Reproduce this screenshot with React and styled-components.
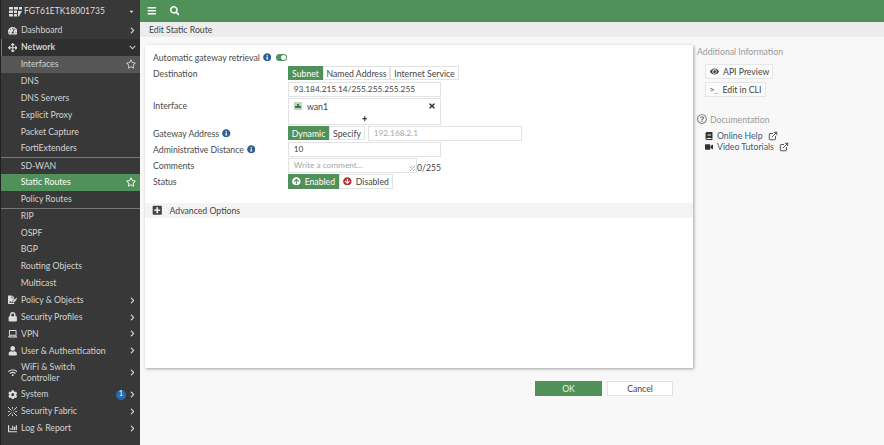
import React from 'react';
import styled, { createGlobalStyle } from 'styled-components';
import { ExternalLink } from 'lucide-react';
import {
  FaArrowsAlt, FaBars, FaBook, FaChartBar, FaChevronDown, FaChevronRight, FaCog, FaEye,
  FaInfoCircle, FaLaptop, FaLock, FaPlus, FaPlusSquare, FaRegQuestionCircle, FaRegStar, FaSearch,
  FaTachometerAlt, FaTimes, FaUser, FaVideo, FaWifi, FaArrowCircleUp, FaArrowCircleDown,
  FaFileSignature, FaCaretDown,
} from 'react-icons/fa';

const GREEN = '#4f9158';

const Global = createGlobalStyle`
  html, body { margin: 0; height: 100%; }
  body { font-family: Lato, "Open Sans", sans-serif; font-size: 8.7px; color: #444; background: #f8f8f8; overflow: hidden; }
  #root { height: 100%; }
  * { box-sizing: border-box; }
`;

const Page = styled.div`
  display: flex;
  width: 884px;
  height: 445px;
`;

const Sidebar = styled.nav`
  width: 140px;
  flex: none;
  background: #383838;
  color: #ddd;
  border-left: 1px solid #222;
`;

const Brand = styled.div`
  display: flex;
  align-items: center;
  height: 22.3px;
  padding: 0 5px 0 8px;
  gap: 2px;
  font-size: 8.5px;
  color: #dedede;
  svg:last-child { margin-left: auto; }
`;

const Item = styled.div`
  position: relative;
  display: flex;
  align-items: center;
  min-height: ${p => p.$tall ? 27 : 16.85}px;
  padding-left: ${p => p.$sub ? 19.7 : p.$bold ? 5 : 6}px;
  padding-right: 4px;
  line-height: 10.5px;
  color: ${p => p.$active ? '#fff' : '#d2d2d2'};
  font-weight: ${p => p.$bold ? 700 : 400};
  background: ${p => p.$active ? GREEN : p.$hover ? '#565656' : p.$bold ? '#2f2f2f' : 'transparent'};
  border-left: ${p => p.$bold ? `1px solid ${GREEN}` : 'none'};
  border-top: ${p => p.$line ? '1px solid #777' : 'none'};
`;

const ItemIcon = styled.span`
  display: flex;
  justify-content: center;
  width: 11px;
  margin-right: 3px;
  color: #ddd;
  font-size: 9.5px;
`;

const ItemTail = styled.span`
  display: flex;
  align-items: center;
  gap: 3px;
  margin-left: auto;
  font-size: 7px;
`;

const StarTail = styled(ItemTail)`
  font-size: 10px;
`;

const Badge = styled.span`
  display: flex;
  align-items: center;
  justify-content: center;
  width: 10px;
  height: 10px;
  border-radius: 50%;
  background: #2a6aa8;
  color: #fff;
  font-size: 7.5px;
`;

const Main = styled.main`
  flex: 1;
  display: flex;
  flex-direction: column;
  min-width: 0;
`;

const TopBar = styled.header`
  display: flex;
  align-items: center;
  gap: 13px;
  height: 22px;
  padding-left: 7px;
  background: ${GREEN};
  color: #fff;
  font-size: 9.5px;
`;

const Crumb = styled.div`
  display: flex;
  align-items: center;
  height: 15px;
  padding-left: 9px;
  background: #ececec;
  color: #444;
`;

const Content = styled.div`
  flex: 1;
  display: flex;
  padding: 8px 0 0 5px;
`;

const Left = styled.div`
  width: 548px;
  flex: none;
`;

const Card = styled.section`
  height: 323px;
  padding-top: 4px;
  background: #fff;
  box-shadow: 1px 1px 3px rgba(0, 0, 0, 0.35);
`;

const Row = styled.div`
  display: grid;
  grid-template-columns: 135px 1fr;
  align-items: ${p => p.$start ? 'start' : 'center'};
  min-height: 16px;
  margin-top: ${p => p.$top || 0}px;
  padding-left: 8px;
`;

const Label = styled.div`
  display: flex;
  align-items: center;
  gap: 3px;
  white-space: nowrap;
  color: #4a4a4a;
  padding-top: ${p => p.$top || 0}px;
`;

const Info = styled(FaInfoCircle)`
  flex: none;
  color: #2f5f8f;
  font-size: 8.5px;
`;

const Toggle = styled.span`
  position: relative;
  flex: none;
  display: inline-block;
  width: 11px;
  height: 7px;
  margin-left: 2px;
  border-radius: 4px;
  background: ${GREEN};
  &::after {
    content: '';
    position: absolute;
    right: 1px;
    top: 1px;
    width: 5px;
    height: 5px;
    border-radius: 50%;
    background: #fff;
  }
`;

const Segs = styled.div`
  display: inline-flex;
`;

const Seg = styled.span`
  display: inline-flex;
  align-items: center;
  justify-content: center;
  gap: 4px;
  width: ${p => p.$w}px;
  height: ${p => p.$h || 14}px;
  border: 1px solid ${p => p.$on ? GREEN : '#e2e2e2'};
  background: ${p => p.$on ? GREEN : '#fff'};
  color: ${p => p.$on ? '#fff' : '#444'};
  white-space: nowrap;
`;

const Input = styled.div`
  display: flex;
  align-items: center;
  width: ${p => p.$w || 153}px;
  height: 15px;
  padding-left: 4.7px;
  border: 1px solid #e2e2e2;
  background: #fff;
  font-size: 8.3px;
  color: ${p => p.$muted ? '#a8a8a8' : '#444'};
`;

const Inline = styled.div`
  display: flex;
  align-items: ${p => p.$end ? 'flex-end' : 'center'};
  gap: ${p => p.$gap || 0}px;
`;

const Multi = styled.div`
  width: 153px;
  height: 27px;
  border: 1px solid #e2e2e2;
  background: #fff;
`;

const MultiLine = styled.div`
  display: flex;
  align-items: center;
  height: 14px;
  padding: 0 4px 0 5px;
  gap: 5px;
`;

const AddLine = styled.div`
  display: flex;
  justify-content: center;
  font-size: 5.5px;
  padding-top: 3px;
  color: #222;
`;

const IfaceIcon = styled.svg`
  width: 8px;
  height: 8px;
`;

const Remove = styled(FaTimes)`
  margin-left: auto;
  font-size: 8px;
  color: #333;
`;

const Resize = styled.span`
  position: absolute;
  right: 1px;
  bottom: 1px;
  width: 5px;
  height: 5px;
  background: repeating-linear-gradient(135deg, transparent 0 1px, #aaa 1px 2px);
`;

const Textarea = styled(Input)`
  position: relative;
  width: 129px;
`;

const Advanced = styled.div`
  display: flex;
  align-items: center;
  height: 15px;
  margin-top: 14px;
  padding-left: 7px;
  gap: 7px;
  background: #f4f4f4;
  svg { font-size: 10.5px; color: #444; }
`;

const Footer = styled.div`
  display: flex;
  gap: 5px;
  margin: 13px 0 0 390px;
`;

const FootButton = styled.button`
  width: ${p => p.$primary ? 67 : 66}px;
  height: 15px;
  padding: 0;
  border: 1px solid ${p => p.$primary ? GREEN : '#e2e2e2'};
  background: ${p => p.$primary ? GREEN : '#fff'};
  color: ${p => p.$primary ? '#e8f3e9' : '#444'};
  font: inherit;
`;

const Aside = styled.aside`
  flex: 1;
  padding: 0 0 0 4px;
`;

const AsideTitle = styled.div`
  display: flex;
  align-items: center;
  gap: 3px;
  height: 12px;
  color: #9a9a9a;
  margin-top: ${p => p.$top || 0}px;
  svg { font-size: 10px; color: #777; }
`;

const AsideBtn = styled.div`
  display: flex;
  align-items: center;
  gap: 4px;
  width: ${p => p.$w}px;
  height: 15px;
  margin: ${p => p.$top || 0}px 0 0 8px;
  padding-left: 4px;
  border: 1px solid #e6e6e6;
  background: #fbfbfb;
  color: #444;
  white-space: nowrap;
  svg { font-size: 9px; color: #444; }
`;

const Prompt = styled.span`
  font-family: "DejaVu Sans Mono", monospace;
  font-size: 7px;
  color: #444;
`;

const DocList = styled.div`
  margin-top: 5px;
`;

const DocLink = styled.div`
  display: flex;
  align-items: center;
  height: 11px;
  margin-left: 8px;
  gap: 4px;
  color: #3f5a78;
  white-space: nowrap;
  svg { font-size: 8px; color: #333; }
`;

const ExtIcon = styled(ExternalLink)`
  margin-left: 1px;
  width: 10px;
  height: 10px;
`;

const FabricIcon = () => (
  <svg width="11" height="11" viewBox="0 0 12 12" stroke="#ddd" strokeWidth="1" fill="none">
    <path d="M1 1l4 4M11 1L7 5M1 11l4-4M11 11L7 7M6 1v2M6 9v2M1 6h2M9 6h2" />
  </svg>
);

const LogoIcon = () => (
  <svg width="13" height="11" viewBox="0 0 13 11" fill="#ddd">
    <path d="M0 1h4v2.500H0zM5 1h4v2.500H5zM10 1h3v2.500h-3zM0 4.500h4V7H0zM5 4.500h3V7H5zM0 8h4v2.500H0zM5 8h3v2.500H5zM9 5h4l-3 5.500H9z" />
  </svg>
);

const subA = ['DNS', 'DNS Servers', 'Explicit Proxy', 'Packet Capture', 'FortiExtenders'];
const subB = ['RIP', 'OSPF', 'BGP', 'Routing Objects', 'Multicast'];

const lower = [
  { icon: <FaFileSignature />, name: 'Policy & Objects' },
  { icon: <FaLock />, name: 'Security Profiles' },
  { icon: <FaLaptop />, name: 'VPN' },
  { icon: <FaUser />, name: 'User & Authentication' },
  { icon: <FaWifi />, name: <>WiFi &amp; Switch<br />Controller</>, tall: true },
  { icon: <FaCog />, name: 'System', badge: 1 },
  { icon: <FabricIcon />, name: 'Security Fabric' },
  { icon: <FaChartBar />, name: 'Log & Report' },
];

export default function App() {
  return (
    <Page>
      <Global />
      <Sidebar>
        <Brand><LogoIcon />FGT61ETK18001735<FaCaretDown size={7} /></Brand>
        <Item>
          <ItemIcon><FaTachometerAlt /></ItemIcon>Dashboard
          <ItemTail><FaChevronRight /></ItemTail>
        </Item>
        <Item $bold>
          <ItemIcon><FaArrowsAlt /></ItemIcon>Network
          <ItemTail><FaChevronDown /></ItemTail>
        </Item>
        <Item $sub $hover>Interfaces<StarTail><FaRegStar /></StarTail></Item>
        {subA.map(s => <Item $sub key={s}>{s}</Item>)}
        <Item $sub $line>SD-WAN</Item>
        <Item $sub $active>Static Routes<StarTail><FaRegStar /></StarTail></Item>
        <Item $sub>Policy Routes</Item>
        {subB.map((s, i) => <Item $sub $line={i === 0} key={s}>{s}</Item>)}
        {lower.map((m, i) => (
          <Item $tall={m.tall} key={i}>
            <ItemIcon>{m.icon}</ItemIcon>
            <span>{m.name}</span>
            <ItemTail>
              {m.badge && <Badge>{m.badge}</Badge>}
              <FaChevronRight />
            </ItemTail>
          </Item>
        ))}
      </Sidebar>

      <Main>
        <TopBar><FaBars /><FaSearch /></TopBar>
        <Crumb>Edit Static Route</Crumb>
        <Content>
          <Left>
            <Card>
              <Row>
                <Label>Automatic gateway retrieval <Info /> <Toggle /></Label>
                <span />
              </Row>
              <Row>
                <Label>Destination</Label>
                <Segs>
                  <Seg $on $w={35}>Subnet</Seg>
                  <Seg $w={67}>Named Address</Seg>
                  <Seg $w={69}>Internet Service</Seg>
                </Segs>
              </Row>
              <Row>
                <span />
                <Input>93.184.215.14/255.255.255.255</Input>
              </Row>
              <Row $top={1} $start>
                <Label $top={2}>Interface</Label>
                <Multi>
                  <MultiLine>
                    <IfaceIcon viewBox="0 0 8 8">
                      <rect width="8" height="8" fill="#bcd8c0" />
                      <path d="M1 6V4h2V2h2v2h2v2z" fill="#3d7a48" />
                    </IfaceIcon>
                    wan1
                    <Remove />
                  </MultiLine>
                  <AddLine><FaPlus /></AddLine>
                </Multi>
              </Row>
              <Row>
                <Label>Gateway Address <Info /></Label>
                <Inline $gap={3}>
                  <Segs>
                    <Seg $on $w={41}>Dynamic</Seg>
                    <Seg $w={36}>Specify</Seg>
                  </Segs>
                  <Input $w={154} $muted>192.168.2.1</Input>
                </Inline>
              </Row>
              <Row>
                <Label>Administrative Distance <Info /></Label>
                <Input>10</Input>
              </Row>
              <Row>
                <Label>Comments</Label>
                <Inline $end>
                  <Textarea $muted>Write a comment...<Resize /></Textarea>
                  <span>0/255</span>
                </Inline>
              </Row>
              <Row>
                <Label>Status</Label>
                <Segs>
                  <Seg $on $w={51} $h={15}><FaArrowCircleUp />Enabled</Seg>
                  <Seg $w={54} $h={15}><FaArrowCircleDown color="#b23030" />Disabled</Seg>
                </Segs>
              </Row>
              <Advanced><FaPlusSquare />Advanced Options</Advanced>
            </Card>
            <Footer>
              <FootButton $primary>OK</FootButton>
              <FootButton>Cancel</FootButton>
            </Footer>
          </Left>
          <Aside>
            <AsideTitle>Additional Information</AsideTitle>
            <AsideBtn $w={68} $top={7}><FaEye />API Preview</AsideBtn>
            <AsideBtn $w={61} $top={3}><Prompt>&gt;_</Prompt>Edit in CLI</AsideBtn>
            <AsideTitle $top={16}><FaRegQuestionCircle />Documentation</AsideTitle>
            <DocList>
              <DocLink><FaBook />Online Help<ExtIcon /></DocLink>
              <DocLink><FaVideo />Video Tutorials<ExtIcon /></DocLink>
            </DocList>
          </Aside>
        </Content>
      </Main>
    </Page>
  );
}
